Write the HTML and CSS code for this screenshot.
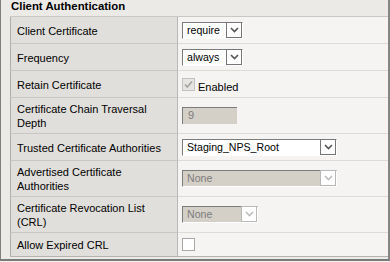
FILE: index.html
```html
<!DOCTYPE html>
<html lang="en">
<head>
  <meta charset="UTF-8" />
  <title>Client Authentication</title>
  <link rel="stylesheet" href="styles.css">
</head>
<body>
  <div class="panel">
    <div class="panel-title">Client Authentication</div>
    <div class="form">
      <div class="row">
        <div class="label">Client Certificate</div>
        <div class="value">
          <span class="select w-sm"><span class="select-text">require</span><span class="arrow"><svg width="9" height="6" viewBox="0 0 9 6"><path d="M1 1 L4.5 4.5 L8 1" fill="none" stroke="currentColor" stroke-width="1.6"/></svg></span></span>
        </div>
      </div>
      <div class="row">
        <div class="label">Frequency</div>
        <div class="value">
          <span class="select w-sm"><span class="select-text">always</span><span class="arrow"><svg width="9" height="6" viewBox="0 0 9 6"><path d="M1 1 L4.5 4.5 L8 1" fill="none" stroke="currentColor" stroke-width="1.6"/></svg></span></span>
        </div>
      </div>
      <div class="row">
        <div class="label">Retain Certificate</div>
        <div class="value">
          <span class="check checked disabled"><svg width="11" height="11" viewBox="0 0 11 11"><path d="M2 5.5 L4.3 8 L9 2.5" fill="none" stroke="currentColor" stroke-width="1.8"/></svg></span>
          <span class="check-label">Enabled</span>
        </div>
      </div>
      <div class="row">
        <div class="label">Certificate Chain Traversal Depth</div>
        <div class="value">
          <span class="textbox disabled">9</span>
        </div>
      </div>
      <div class="row">
        <div class="label">Trusted Certificate Authorities</div>
        <div class="value">
          <span class="select w-lg"><span class="select-text">Staging_NPS_Root</span><span class="arrow"><svg width="9" height="6" viewBox="0 0 9 6"><path d="M1 1 L4.5 4.5 L8 1" fill="none" stroke="currentColor" stroke-width="1.6"/></svg></span></span>
        </div>
      </div>
      <div class="row">
        <div class="label">Advertised Certificate Authorities</div>
        <div class="value">
          <span class="select w-lg disabled"><span class="select-text">None</span><span class="arrow"><svg width="9" height="6" viewBox="0 0 9 6"><path d="M1 1 L4.5 4.5 L8 1" fill="none" stroke="currentColor" stroke-width="1.6"/></svg></span></span>
        </div>
      </div>
      <div class="row">
        <div class="label">Certificate Revocation List (CRL)</div>
        <div class="value">
          <span class="select w-md disabled"><span class="select-text">None</span><span class="arrow"><svg width="9" height="6" viewBox="0 0 9 6"><path d="M1 1 L4.5 4.5 L8 1" fill="none" stroke="currentColor" stroke-width="1.6"/></svg></span></span>
        </div>
      </div>
      <div class="row last">
        <div class="label">Allow Expired CRL</div>
        <div class="value">
          <span class="check"></span>
        </div>
      </div>
    </div>
  </div>
</body>
</html>
```

FILE: styles.css
```css
* { box-sizing: border-box; }
body {
  margin: 0;
  background-color: #f0f0f0;
  font-family: "Liberation Sans", Arial, sans-serif;
  font-size: 11px;
  color: #000;
}
.panel {
  width: 390px;
  height: 261px;
  background-color: #ebeae6;
  border-left: 1px solid #808080;
  border-right: 2px solid #868686;
  border-bottom: 2px solid #7a7a7a;
  overflow: hidden;
}
.panel-title {
  height: 16px;
  padding-left: 10px;
  font-weight: bold;
  font-size: 11.4px;
  line-height: 13px;
  color: #000;
}
.form {
  margin-left: 9px;
  border-top: 1px solid #c9c8c4;
  border-bottom: 1px solid #b4b4b4;
}
.row {
  display: grid;
  grid-template-columns: 168px 1fr;
}
.label {
  display: flex;
  align-items: center;
  min-height: 27px;
  padding: 4px 7px 3px 6px;
  line-height: 14px;
  background-color: #e0dfdb;
  border-left: 1px solid #aeaeae;
  border-right: 1px solid #b8b8b8;
  border-bottom: 1px solid #c8c7c3;
}
.value {
  display: flex;
  align-items: center;
  padding: 0 4px;
  background-color: #f5f4f2;
  border-bottom: 1px solid #dcdbd7;
}
.row.last .label,
.row.last .value {
  min-height: 23px;
  border-bottom: none;
}

/* fake select boxes */
.select {
  display: inline-flex;
  height: 17px;
  background-color: #fff;
  border-top: 1px solid #7c7c7c;
  border-left: 1px solid #7c7c7c;
  border-right: 1px solid #fff;
  border-bottom: 1px solid #fff;
}
.select.w-sm { width: 61px; }
.select.w-md { width: 76px; }
.select.w-lg { width: 155px; }
.select-text {
  flex: 1;
  padding-left: 4px;
  line-height: 15px;
  font-size: 10.6px;
  color: #000;
  white-space: nowrap;
  overflow: hidden;
}
.arrow {
  display: flex;
  align-items: center;
  justify-content: center;
  width: 16px;
  height: 16px;
  margin-top: -1px;
  background-color: #fff;
  border: 1px solid #767676;
  color: #555;
}
.select.disabled {
  background-color: #d4d0c8;
}
.select.disabled .select-text {
  color: #7c7c7c;
}
.select.disabled .arrow {
  border-color: #b8b8b8;
  color: #bdbdbd;
}

.textbox {
  width: 55px;
  height: 17px;
  padding-left: 5px;
  line-height: 15px;
  background-color: #d4d0c8;
  border-top: 1px solid #7c7c7c;
  border-left: 1px solid #7c7c7c;
  color: #7c7c7c;
}

.check {
  display: inline-flex;
  align-items: center;
  justify-content: center;
  width: 13px;
  height: 13px;
  background-color: #fff;
  border: 1px solid #a8a8a8;
}
.check.disabled {
  background-color: #e6e5e2;
  border-color: #c2c2c2;
  color: #a6a6a6;
}
.check-label {
  margin-left: 3px;
  margin-top: 5px;
}
```
